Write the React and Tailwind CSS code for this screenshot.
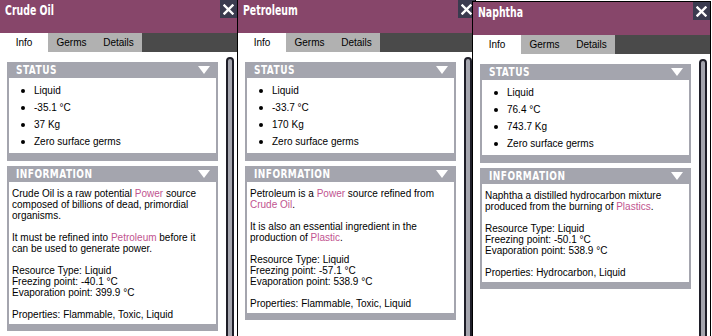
import React from "react";

const windows = [
    {
        id: "crude",
        left: "left-[-1px]",
        top: "top-[-1px]",
        title: "Crude Oil",
        status: ["Liquid", "-35.1 °C", "37 Kg", "Zero surface germs"],
        info: [
            [["Crude Oil is a raw potential "], ["Power", true], [" source composed of billions of dead, primordial organisms."]],
            [["It must be refined into "], ["Petroleum", true], [" before it can be used to generate power."]],
            [["Resource Type: Liquid"], ["\n"], ["Freezing point: -40.1 °C"], ["\n"], ["Evaporation point: 399.9 °C"]],
            [["Properties: Flammable, Toxic, Liquid"]],
        ],
    },
    {
        id: "petroleum",
        left: "left-[237px]",
        top: "top-[-1px]",
        title: "Petroleum",
        status: ["Liquid", "-33.7 °C", "170 Kg", "Zero surface germs"],
        info: [
            [["Petroleum is a "], ["Power", true], [" source refined from "], ["Crude Oil", true], ["."]],
            [["It is also an essential ingredient in the production of "], ["Plastic", true], ["."]],
            [["Resource Type: Liquid"], ["\n"], ["Freezing point: -57.1 °C"], ["\n"], ["Evaporation point: 538.9 °C"]],
            [["Properties: Flammable, Toxic, Liquid"]],
        ],
    },
    {
        id: "naphtha",
        left: "left-[472px]",
        top: "top-[1px]",
        title: "Naphtha",
        status: ["Liquid", "76.4 °C", "743.7 Kg", "Zero surface germs"],
        info: [
            [["Naphtha a distilled hydrocarbon mixture produced from the burning of "], ["Plastics", true], ["."]],
            [["Resource Type: Liquid"], ["\n"], ["Freezing point: -50.1 °C"], ["\n"], ["Evaporation point: 538.9 °C"]],
            [["Properties: Hydrocarbon, Liquid"]],
        ],
    },
];

const Triangle = () => (
    <svg width="12" height="8" viewBox="0 0 12 8" className="block">
        <polygon points="0,0 12,0 6,8" fill="#ffffff"/>
    </svg>
);

// narrow squared display face, approximated with DejaVu Sans Bold squeezed horizontally
const BoxHeader = ({label}) => (
    <div className="h-[16px] flex items-center justify-between pl-[9px] pr-[8px] bg-[#a4a5ae]">
        <span className="font-[family-name:'DejaVu_Sans',sans-serif] text-white font-bold text-[12px] leading-none tracking-[0.6px] scale-x-[0.75] origin-left inline-block">
            {label}
        </span>
        <Triangle/>
    </div>
);

const Window = ({win}) => (
    <div className={`absolute ${win.left} ${win.top} w-[239px] h-[340px] border border-black bg-white flex flex-col`}>
        <div className="h-[33px] bg-[#87466a] flex items-start justify-between">
            <span className="font-[family-name:'DejaVu_Sans',sans-serif] text-white font-bold text-[14px] leading-none ml-[5px] pt-[3px] scale-x-[0.67] origin-left inline-block">
                {win.title}
            </span>
            <div className="w-[17px] h-[18px] bg-[#3a3b4f] flex items-center justify-center">
                <svg width="11" height="11" viewBox="0 0 11 11">
                    <path d="M1.5 1.5 L9.5 9.5 M9.5 1.5 L1.5 9.5" stroke="#ffffff" strokeWidth="2.4" strokeLinecap="square"/>
                </svg>
            </div>
        </div>
        <div className="h-[19px] bg-[#4a4a4a] flex font-[family-name:'Liberation_Sans',Arial,sans-serif] text-[10px] text-black">
            <div className="w-[48px] bg-white flex items-center justify-center">Info</div>
            <div className="w-[47px] bg-[#b1b1b1] flex items-center justify-center">Germs</div>
            <div className="w-[47px] bg-[#b1b1b1] flex items-center justify-center">Details</div>
        </div>
        <div className="flex flex-1 font-[family-name:'Liberation_Sans',Arial,sans-serif] text-[10px] text-black">
            <div className="ml-[7px] mt-[10px] w-[211px] flex flex-col gap-[5px]">
                <div className="bg-[#a4a5ae] pb-[8px]">
                    <BoxHeader label="STATUS"/>
                    <div className="mx-[2px] bg-white pt-[4px] pb-[3px]">
                        {win.status.map(item => (
                            <div key={item} className="h-[17px] flex items-center pl-[12px]">
                                <span className="w-[4px] h-[4px] rounded-full bg-black"/>
                                <span className="ml-[9px] leading-none">{item}</span>
                            </div>
                        ))}
                    </div>
                </div>
                <div className="bg-[#a4a5ae] pb-[7px]">
                    <BoxHeader label="INFORMATION"/>
                    <div className="mx-[2px] bg-white pt-[6px] pb-[4px] pl-[3px] pr-[6px] flex flex-col gap-[11px] leading-[11px]">
                        {win.info.map((para, i) => (
                            <p key={i} className="whitespace-pre-line">
                                {para.map(([text, link], j) => (
                                    link
                                        ? <span key={j} className="text-[#c1548f]">{text}</span>
                                        : <span key={j}>{text}</span>
                                ))}
                            </p>
                        ))}
                    </div>
                </div>
            </div>
            <div className="ml-[8px] mt-[5px] w-[8px] flex-1 max-w-[8px] border-2 border-[#1e1e28] rounded-t-full bg-[#a4a5ae]"/>
        </div>
    </div>
);

const App = () => (
    <div className="relative w-[712px] h-[336px] overflow-hidden bg-white">
        {windows.map(win => <Window key={win.id} win={win}/>)}
    </div>
);

export default App;
